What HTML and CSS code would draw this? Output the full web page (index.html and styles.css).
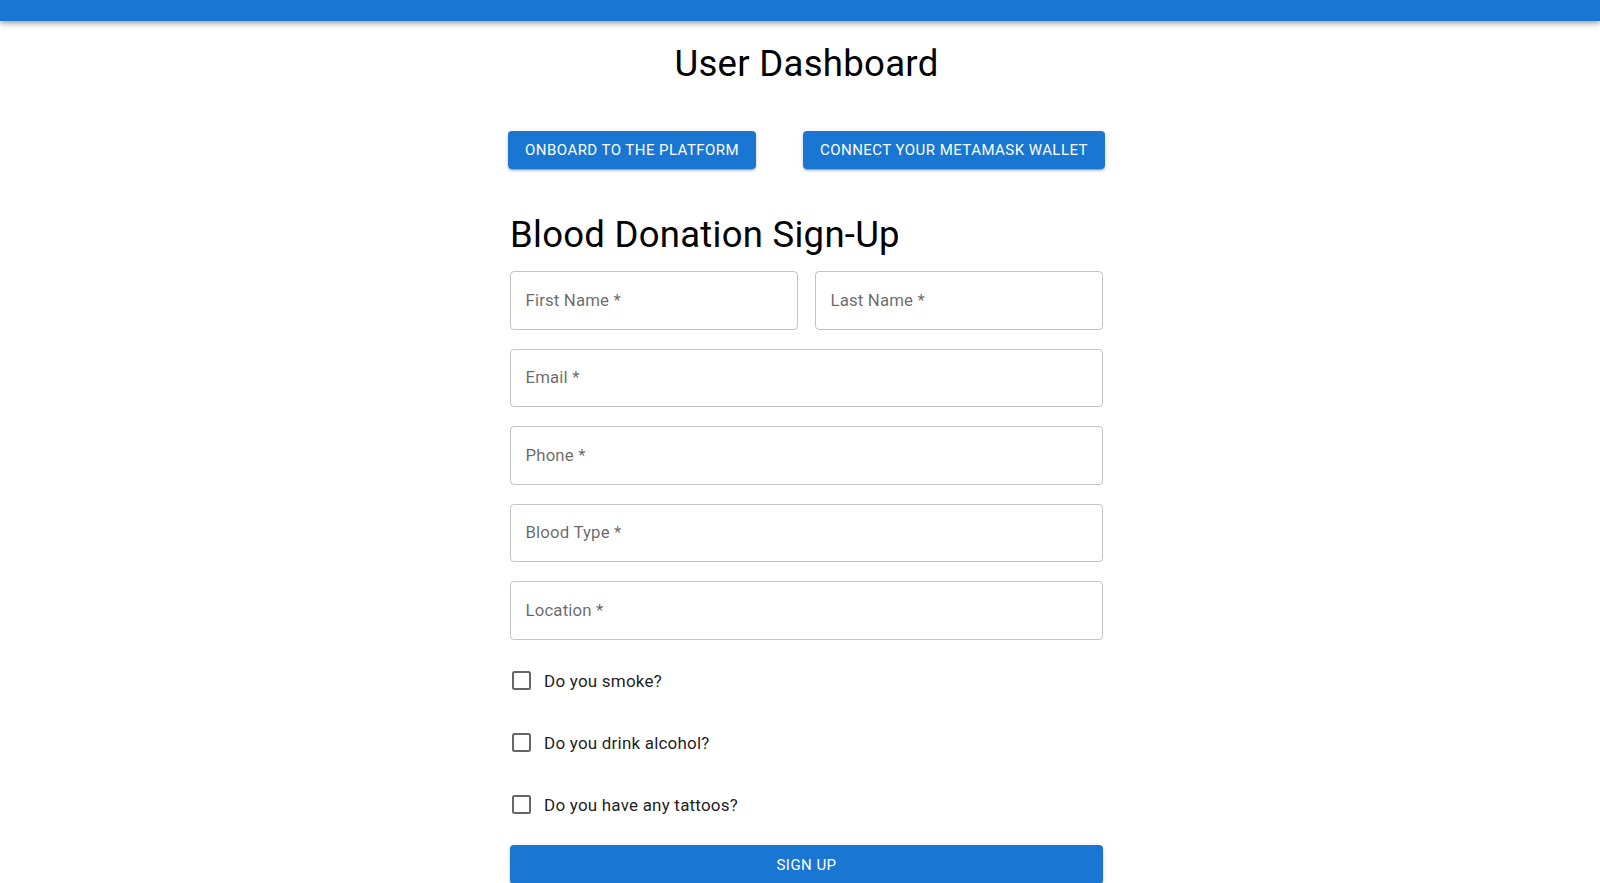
FILE: index.html
```html
<!DOCTYPE html>
<html lang="en">
<head>
<meta charset="utf-8">
<title>User Dashboard</title>
<link rel="stylesheet" href="styles.css">
</head>
<body>
<header class="appbar"></header>
<main class="page">
  <h1 class="title">User Dashboard</h1>
  <div class="actions">
    <button class="btn">Onboard to the platform</button>
    <button class="btn">Connect your MetaMask wallet</button>
  </div>
  <h2 class="form-title">Blood Donation Sign-Up</h2>
  <form class="form">
    <div class="row-two">
      <label class="field"><span class="field-label">First Name *</span></label>
      <label class="field"><span class="field-label">Last Name *</span></label>
    </div>
    <label class="field"><span class="field-label">Email *</span></label>
    <label class="field"><span class="field-label">Phone *</span></label>
    <label class="field"><span class="field-label">Blood Type *</span></label>
    <label class="field"><span class="field-label">Location *</span></label>
    <div class="checks">
      <label class="check"><span class="box"></span><span class="check-text">Do you smoke?</span></label>
      <label class="check"><span class="box"></span><span class="check-text">Do you drink alcohol?</span></label>
      <label class="check"><span class="box"></span><span class="check-text">Do you have any tattoos?</span></label>
    </div>
    <button type="button" class="btn btn-full">Sign Up</button>
  </form>
</main>
</body>
</html>
```

FILE: styles.css
```css
* { box-sizing: border-box; }
html, body {
  margin: 0;
  padding: 0;
  background: #fff;
  font-family: Roboto, "Liberation Sans", Arial, sans-serif;
  color: rgba(0, 0, 0, 0.87);
  overflow: hidden;
}
.appbar {
  height: 21px;
  background: #1976d2;
  box-shadow: 0px 2px 4px -1px rgba(0,0,0,0.2), 0px 4px 5px 0px rgba(0,0,0,0.14), 0px 1px 10px 0px rgba(0,0,0,0.12);
  position: relative;
  z-index: 2;
}
.page {
  width: 593px;
  margin-left: calc(50% - 290px);
  display: flex;
  flex-direction: column;
}
.title {
  margin: 21.4px 0 0;
  font-size: 36.6px;
  font-weight: 400;
  line-height: 44.5px;
  letter-spacing: 0.00735em;
  text-align: center;
  color: #000;
}
.actions {
  margin-top: 44px;
  display: flex;
  justify-content: center;
  gap: 47px;
}
.btn {
  height: 38.6px;
  padding: 0 17px;
  border: 0;
  border-radius: 4px;
  background: #1976d2;
  color: #fff;
  font-family: Roboto, "Liberation Sans", Arial, sans-serif;
  font-size: 15px;
  font-weight: 400;
  letter-spacing: 0.03em;
  text-transform: uppercase;
  white-space: nowrap;
  flex-shrink: 0;
  box-shadow: 0px 3px 1px -2px rgba(0,0,0,0.2), 0px 2px 2px 0px rgba(0,0,0,0.14), 0px 1px 5px 0px rgba(0,0,0,0.12);
}
.form-title {
  margin: 43.2px 0 0;
  font-size: 36.5px;
  font-weight: 400;
  line-height: 44.5px;
  letter-spacing: 0.00735em;
  color: #000;
}
.form {
  margin-top: 14px;
  display: flex;
  flex-direction: column;
  gap: 18.9px;
}
.row-two {
  display: flex;
  gap: 17px;
}
.row-two .field { flex: 1; }
.field {
  height: 58.6px;
  border: 1px solid rgba(0, 0, 0, 0.23);
  border-radius: 4px;
  padding-left: 14.5px;
  display: flex;
  align-items: center;
}
.field-label {
  font-size: 16.8px;
  line-height: 1;
  padding-bottom: 1px;
  color: rgba(0, 0, 0, 0.6);
  letter-spacing: 0.00938em;
}
.checks {
  margin-top: -8.8px;
  display: flex;
  flex-direction: column;
}
.check {
  height: 62px;
  display: flex;
  align-items: center;
  padding-left: 1.5px;
}
.box {
  width: 19px;
  height: 19px;
  border: 2.1px solid rgba(0, 0, 0, 0.6);
  border-radius: 2.5px;
  flex-shrink: 0;
}
.check-text {
  margin-left: 13.6px;
  font-size: 17px;
  letter-spacing: 0.012em;
  color: rgba(0, 0, 0, 0.9);
}
.btn-full {
  margin-top: -9.6px;
  width: 100%;
  height: 39px;
}
```
